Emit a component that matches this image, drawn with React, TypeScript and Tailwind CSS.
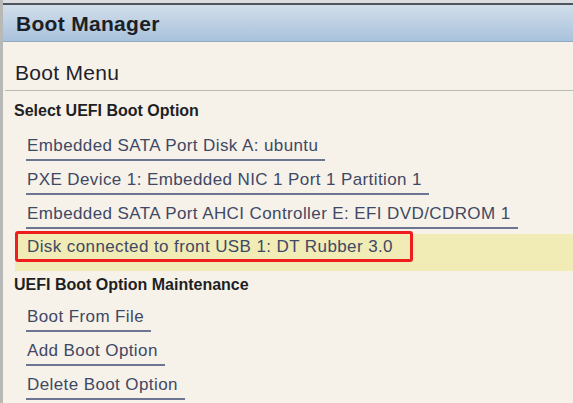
import React from 'react';

const bootOptions = [
  'Embedded SATA Port Disk A: ubuntu',
  'PXE Device 1: Embedded NIC 1 Port 1 Partition 1',
  'Embedded SATA Port AHCI Controller E: EFI DVD/CDROM 1',
];

const maintenance = ['Boot From File', 'Add Boot Option', 'Delete Boot Option'];

const Option: React.FC<{ label: string; className?: string }> = ({ label, className = '' }) => (
  <div
    className={`self-start pl-[1px] pr-[7px] pb-[5px] border-b-2 border-[#6c7592] text-[17px] leading-[16px] tracking-[0.4px] text-[#3f4864] whitespace-nowrap ${className}`}
  >
    {label}
  </div>
);

export default function App() {
  return (
    <div
      className="w-[573px] h-[403px] overflow-hidden bg-[#f6f2ea] border-l-[3px] border-[#b8b8b6] flex flex-col"
      style={{ fontFamily: '"Liberation Sans", Arial, sans-serif' }}
    >
      {/* Title bar */}
      <div className="h-[3px] bg-[#dcdde0]" />
      <div className="h-[2px] bg-[#4f545c]" />
      <div className="h-[37px] bg-linear-to-b from-[#d2deea] to-[#a8c2dc] border-b border-[#93abc3] flex items-center pl-[13px] pt-[2px]">
        <span className="text-[21px] font-bold tracking-[0.3px] text-[#1c1f26]">Boot Manager</span>
      </div>

      {/* Page heading */}
      <div className="mt-[20px] ml-[2px] pl-[10px] pb-[7px] border-b border-[#b9b8b4]">
        <div className="text-[21px] leading-[21px] tracking-[0.3px] text-[#1f2128]">Boot Menu</div>
      </div>

      <div className="flex flex-col pl-[11px]">
        <div className="mt-[12px] text-[16px] leading-[16px] font-bold text-[#1e1f24]">Select UEFI Boot Option</div>

        <Option label={bootOptions[0]} className="ml-[12px] mt-[19px]" />
        <Option label={bootOptions[1]} className="ml-[12px] mt-[11px]" />
        <Option label={bootOptions[2]} className="ml-[12px] mt-[11px]" />

        {/* Highlighted row */}
        <div className="relative mt-[5px] ml-[1px] h-[37px] bg-[#f1ebb6] flex flex-col pt-[5px]">
          <Option label="Disk connected to front USB 1: DT Rubber 3.0" className="ml-[11px]" />
          <div className="absolute left-[0px] top-[-3px] w-[398px] h-[31px] border-[3px] border-[#f01d1d] rounded-[3px]" />
        </div>

        <div className="mt-[6px] text-[16px] leading-[16px] font-bold text-[#1e1f24]">UEFI Boot Option Maintenance</div>

        <Option label={maintenance[0]} className="ml-[12px] mt-[16px]" />
        <Option label={maintenance[1]} className="ml-[12px] mt-[11px]" />
        <Option label={maintenance[2]} className="ml-[12px] mt-[11px]" />
      </div>
    </div>
  );
}
